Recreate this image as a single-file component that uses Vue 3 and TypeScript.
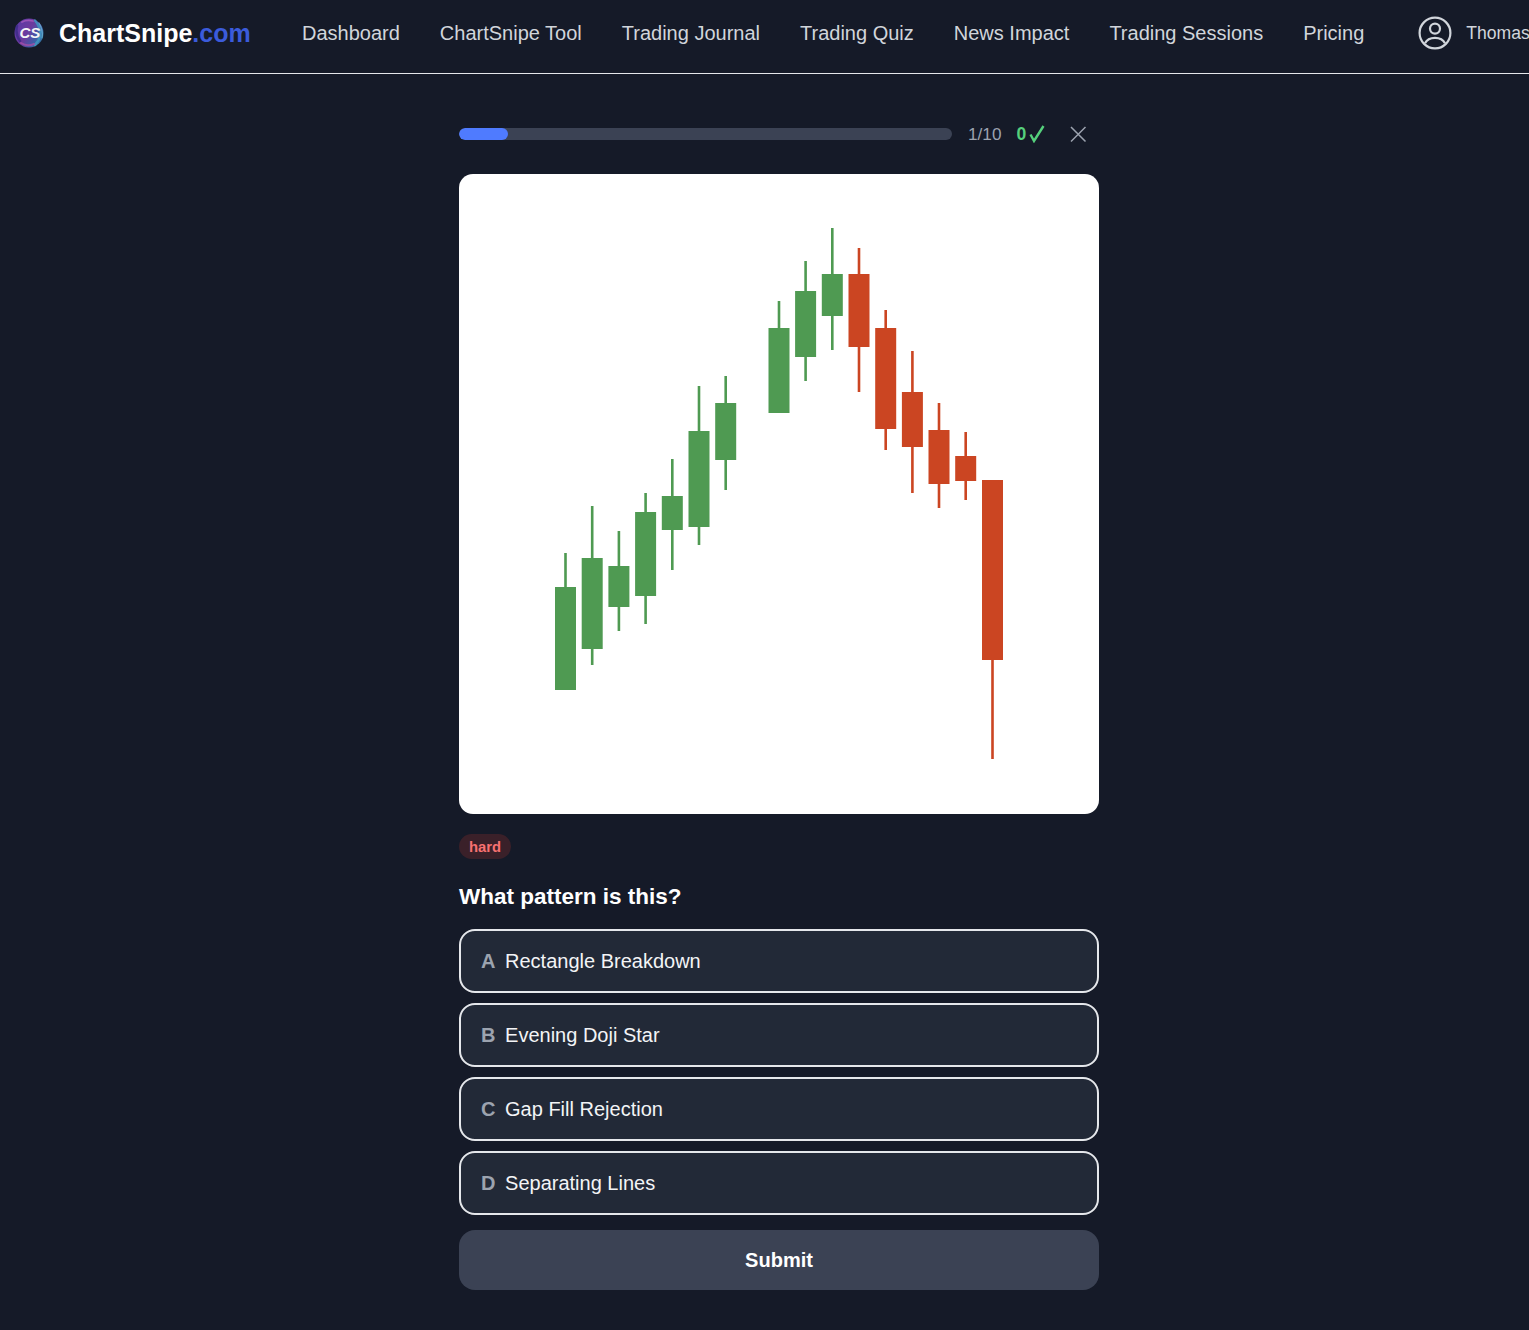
<template>
  <div class="page">
    <header class="topbar">
      <a class="brand">
        <svg class="brand-logo" width="30" height="30" viewBox="0 0 30 30">
          <defs>
            <linearGradient id="logoFill" x1="0" y1="0.2" x2="1" y2="0.8">
              <stop offset="0" stop-color="#5a3aa6" />
              <stop offset="0.45" stop-color="#6d3a9e" />
              <stop offset="0.75" stop-color="#3f5da8" />
              <stop offset="1" stop-color="#2f7ea6" />
            </linearGradient>
          </defs>
          <circle cx="15" cy="15" r="14.500" fill="url(#logoFill)" />
          <g fill="none" stroke-linecap="round">
            <path d="M21 2.500 Q27 9 26 18 Q25 23 21 27" stroke="#3f9ac2" stroke-width="2.500" opacity="0.8" />
            <path d="M25 5 Q29.500 12 28 20" stroke="#6fc0d8" stroke-width="1.200" opacity="0.7" />
            <path d="M3 8 Q1 16 6 23" stroke="#3b2a86" stroke-width="2.500" opacity="0.8" />
            <path d="M8 4 Q13 1.500 19 3" stroke="#b25fc0" stroke-width="1.800" opacity="0.7" />
            <path d="M7 25 Q13 29 20 26" stroke="#a54fa8" stroke-width="2" opacity="0.8" />
          </g>
          <text x="5.500" y="20" class="logo-text">CS</text>
        </svg>
        <span class="brand-name">ChartSnipe<span class="brand-tld">.com</span></span>
      </a>
      <nav class="nav">
        <a v-for="item in navItems" :key="item" class="nav-link">{{ item }}</a>
      </nav>
      <div class="user">
        <svg width="36" height="36" viewBox="0 0 36 36" fill="none" stroke="#d1d5db" stroke-width="2.200">
          <circle cx="18" cy="18" r="15.400" />
          <circle cx="18" cy="13.600" r="5" />
          <path d="M8 28.200 C10 24 13.500 22.800 18 22.800 C22.500 22.800 26 24 28 28.200" />
        </svg>
        <span class="user-name">Thomas</span>
      </div>
    </header>

    <main class="quiz">
      <div class="progress-row">
        <div class="progress-track">
          <div class="progress-fill" :style="{ width: progress + '%' }"></div>
        </div>
        <span class="progress-count">1/10</span>
        <span class="score">0</span>
        <svg class="score-check" width="16" height="18" viewBox="0 0 16 18" fill="none" stroke="#55d07c" stroke-width="2.400">
          <path d="M1.500 9.500 L5 16 L14.500 1" />
        </svg>
        <button class="close-btn" aria-label="Close">
          <svg width="18" height="18" viewBox="0 0 18 18" stroke="#9ca3af" stroke-width="1.500" fill="none">
            <path d="M2 2 L16.500 16.500 M16.500 2 L2 16.500" />
          </svg>
        </button>
      </div>

      <div class="chart-card">
        <svg width="640" height="640" viewBox="459 174 640 640">
          <g v-for="c in candles" :key="c.x" :fill="c.up ? green : red">
            <rect :x="c.x - 1.300" :y="c.high" width="2.600" :height="c.low - c.high" />
            <rect :x="c.x - 10.500" :y="c.top" width="21" :height="c.bottom - c.top" />
          </g>
        </svg>
      </div>

      <span class="difficulty">hard</span>
      <h2 class="question">What pattern is this?</h2>

      <div class="options">
        <button v-for="opt in options" :key="opt.key" class="option">
          <span class="option-key">{{ opt.key }}</span>
          <span>{{ opt.label }}</span>
        </button>
      </div>

      <button class="submit-btn">Submit</button>
    </main>
  </div>
</template>

<script setup lang="ts">
interface Candle {
  x: number
  high: number
  low: number
  top: number
  bottom: number
  up: boolean
}

const green = '#4f9a52'
const red = '#cb4522'
const progress = 10

const navItems = [
  'Dashboard',
  'ChartSnipe Tool',
  'Trading Journal',
  'Trading Quiz',
  'News Impact',
  'Trading Sessions',
  'Pricing',
]

const options = [
  { key: 'A', label: 'Rectangle Breakdown' },
  { key: 'B', label: 'Evening Doji Star' },
  { key: 'C', label: 'Gap Fill Rejection' },
  { key: 'D', label: 'Separating Lines' },
]

const candles: Candle[] = [
  { x: 565.5, high: 553, low: 690, top: 587, bottom: 690, up: true },
  { x: 592.2, high: 506, low: 665, top: 558, bottom: 649, up: true },
  { x: 618.9, high: 531, low: 631, top: 566, bottom: 607, up: true },
  { x: 645.6, high: 493, low: 624, top: 512, bottom: 596, up: true },
  { x: 672.3, high: 459, low: 570, top: 496, bottom: 530, up: true },
  { x: 699, high: 386, low: 545, top: 431, bottom: 527, up: true },
  { x: 725.7, high: 376, low: 490, top: 403, bottom: 460, up: true },
  { x: 779, high: 301, low: 413, top: 328, bottom: 413, up: true },
  { x: 805.6, high: 261, low: 381, top: 291, bottom: 357, up: true },
  { x: 832.3, high: 228, low: 350, top: 274, bottom: 316, up: true },
  { x: 859, high: 248, low: 392, top: 274, bottom: 347, up: false },
  { x: 885.7, high: 310, low: 450, top: 328, bottom: 429, up: false },
  { x: 912.4, high: 351, low: 493, top: 392, bottom: 447, up: false },
  { x: 939, high: 403, low: 508, top: 430, bottom: 484, up: false },
  { x: 965.7, high: 432, low: 500, top: 456, bottom: 481, up: false },
  { x: 992.5, high: 480, low: 759, top: 480, bottom: 660, up: false },
]
</script>

<style>
html,
body {
  margin: 0;
  background: #151a28;
  overflow: hidden;
}
</style>

<style scoped>
.page {
  width: 1558px;
  height: 1330px;
  background: #151a28;
  color: #fff;
  font-family: 'Liberation Sans', Arial, sans-serif;
}
.topbar {
  height: 73px;
  border-bottom: 1px solid #e5e7eb;
  display: flex;
  align-items: center;
  padding-left: 14px;
}
.brand {
  display: flex;
  align-items: center;
  gap: 15px;
  width: 288px;
  margin-bottom: 7px;
}
.brand-logo {
  flex: none;
}
.logo-text {
  font-family: 'Liberation Sans', Arial, sans-serif;
  font-size: 15px;
  font-weight: 700;
  font-style: italic;
  fill: #f3f4f6;
}
.brand-name {
  font-size: 25px;
  font-weight: 700;
}
.brand-tld {
  color: #3b5bdb;
}
.nav {
  display: flex;
  gap: 40px;
  margin-bottom: 7px;
}
.nav-link {
  font-size: 20px;
  color: #d1d5db;
}
.user {
  display: flex;
  align-items: center;
  gap: 13px;
  margin-left: 53px;
  margin-bottom: 7px;
}
.user-name {
  font-size: 17.600px;
  color: #d1d5db;
}
.quiz {
  width: 640px;
  margin: 0 auto;
  padding-top: 47px;
  display: flex;
  flex-direction: column;
  align-items: flex-start;
}
.progress-row {
  width: 100%;
  height: 26px;
  display: flex;
  align-items: center;
}
.progress-track {
  width: 493px;
  height: 12px;
  border-radius: 6px;
  background: #3b4254;
  overflow: hidden;
}
.progress-fill {
  height: 100%;
  border-radius: 6px;
  background: #4f7bff;
}
.progress-count {
  margin-left: 16px;
  font-size: 17.200px;
  color: #9ca3af;
}
.score {
  margin-left: 15px;
  font-size: 17.600px;
  font-weight: 700;
  color: #55d07c;
}
.score-check {
  margin-left: 3px;
  flex: none;
}
.close-btn {
  margin-left: 24px;
  padding: 0;
  width: 18px;
  height: 18px;
  display: flex;
  background: none;
  border: 0;
}
.chart-card {
  margin-top: 27px;
  width: 640px;
  height: 640px;
  border-radius: 14px;
  background: #fff;
  overflow: hidden;
}
.chart-card svg {
  display: block;
}
.difficulty {
  margin-top: 20px;
  height: 25px;
  padding: 0 10px;
  border-radius: 13px;
  background: #3a2029;
  color: #f87171;
  font-size: 14.800px;
  font-weight: 700;
  line-height: 26px;
}
.question {
  margin: 23px 0 18px;
  font-size: 22.500px;
  line-height: 29px;
  font-weight: 700;
  color: #fff;
}
.options {
  width: 100%;
  display: flex;
  flex-direction: column;
  gap: 10px;
}
.option {
  width: 100%;
  height: 64px;
  box-sizing: border-box;
  display: flex;
  align-items: center;
  gap: 9.600px;
  padding: 0 20px;
  border: 2px solid #e5e7eb;
  border-radius: 16px;
  background: #222937;
  color: #f3f4f6;
  font-family: inherit;
  font-size: 20px;
}
.option-key {
  font-weight: 700;
  font-size: 20px;
  color: #9ca3af;
}
.submit-btn {
  margin-top: 15px;
  width: 100%;
  height: 60px;
  border: 0;
  border-radius: 16px;
  background: #3b4254;
  color: #fff;
  font-family: inherit;
  font-size: 20px;
  font-weight: 700;
}
</style>
